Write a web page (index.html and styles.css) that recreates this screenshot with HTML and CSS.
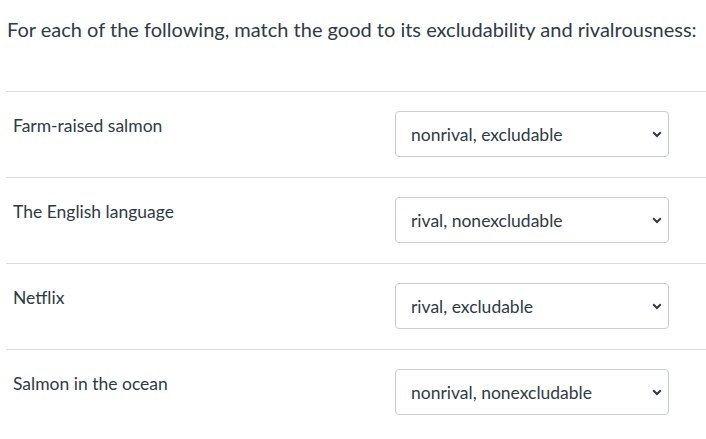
FILE: index.html
```html
<!DOCTYPE html>
<html lang="en">
<head>
<meta charset="utf-8">
<title>Matching question</title>
<link rel="stylesheet" href="styles.css">
</head>
<body>
<div class="question">
  <p class="prompt">For each of the following, match the good to its excludability and rivalrousness:</p>
  <div class="answers">
    <div class="row">
      <div class="label">Farm-raised salmon</div>
      <div class="select"><span class="value">nonrival, excludable</span><svg class="chev" width="10" height="7" viewBox="0 0 10 7"><path d="M1.2 1.3 L5 5 L8.8 1.3" fill="none" stroke="#2d3b45" stroke-width="2"/></svg></div>
    </div>
    <div class="row">
      <div class="label">The English language</div>
      <div class="select"><span class="value">rival, nonexcludable</span><svg class="chev" width="10" height="7" viewBox="0 0 10 7"><path d="M1.2 1.3 L5 5 L8.8 1.3" fill="none" stroke="#2d3b45" stroke-width="2"/></svg></div>
    </div>
    <div class="row">
      <div class="label">Netflix</div>
      <div class="select"><span class="value">rival, excludable</span><svg class="chev" width="10" height="7" viewBox="0 0 10 7"><path d="M1.2 1.3 L5 5 L8.8 1.3" fill="none" stroke="#2d3b45" stroke-width="2"/></svg></div>
    </div>
    <div class="row">
      <div class="label">Salmon in the ocean</div>
      <div class="select"><span class="value">nonrival, nonexcludable</span><svg class="chev" width="10" height="7" viewBox="0 0 10 7"><path d="M1.2 1.3 L5 5 L8.8 1.3" fill="none" stroke="#2d3b45" stroke-width="2"/></svg></div>
    </div>
  </div>
</div>
</body>
</html>
```

FILE: styles.css
```css
html, body {
  margin: 0;
  padding: 0;
  background: #ffffff;
}
body {
  font-family: Lato, "Open Sans", sans-serif;
  color: #2d3b45;
}
.question {
  padding: 0 0 0 6px;
}
.prompt {
  margin: 0;
  padding: 16px 0 0 1px;
  font-size: 20px;
  line-height: 26px;
  height: 91px;
  box-sizing: border-box;
}
.row {
  display: flex;
  align-items: flex-start;
  border-top: 1px solid #dcdcdc;
  height: 86px;
  box-sizing: border-box;
  padding-top: 19px;
}
.label {
  width: 389px;
  padding-left: 7px;
  font-size: 17.5px;
  line-height: 22px;
  padding-top: 4px;
  box-sizing: border-box;
}
.select {
  width: 274px;
  height: 46px;
  box-sizing: border-box;
  border: 1px solid #c7cdd1;
  border-radius: 4px;
  display: flex;
  align-items: center;
  justify-content: space-between;
  padding: 0 6px 0 15px;
  font-size: 17.5px;
}
.value {
  padding-top: 0;
}
.chev {
  display: block;
  margin-top: 1px;
}
```
